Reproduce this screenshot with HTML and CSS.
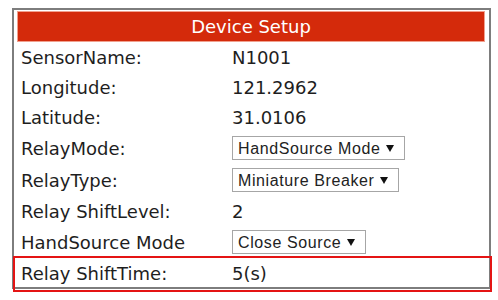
FILE: index.html
```html
<!DOCTYPE html>
<html lang="en">
<head>
    <meta charset="UTF-8">
    <title>Device Setup</title>
    <link rel="stylesheet" href="styles.css">
</head>
<body>
    <div class="setup">
        <div class="setup-title">Device Setup</div>

        <div class="setup-row">
            <span class="label">SensorName:</span>
            <span class="value">N1001</span>
        </div>
        <div class="setup-row">
            <span class="label">Longitude:</span>
            <span class="value">121.2962</span>
        </div>
        <div class="setup-row">
            <span class="label">Latitude:</span>
            <span class="value">31.0106</span>
        </div>
        <div class="setup-row select-row">
            <span class="label">RelayMode:</span>
            <span class="value">
                <span class="select">HandSource Mode
                    <svg class="arrow" width="8" height="7" viewBox="0 0 8 7"><path d="M0 0H8L4 7Z"/></svg>
                </span>
            </span>
        </div>
        <div class="setup-row select-row">
            <span class="label">RelayType:</span>
            <span class="value">
                <span class="select">Miniature Breaker
                    <svg class="arrow" width="8" height="7" viewBox="0 0 8 7"><path d="M0 0H8L4 7Z"/></svg>
                </span>
            </span>
        </div>
        <div class="setup-row">
            <span class="label">Relay ShiftLevel:</span>
            <span class="value">2</span>
        </div>
        <div class="setup-row select-row">
            <span class="label">HandSource Mode</span>
            <span class="value">
                <span class="select">Close Source
                    <svg class="arrow" width="8" height="7" viewBox="0 0 8 7"><path d="M0 0H8L4 7Z"/></svg>
                </span>
            </span>
        </div>
        <div class="setup-row">
            <span class="label">Relay ShiftTime:</span>
            <span class="value">5(s)</span>
        </div>
    </div>

    <!-- red annotation box drawn over the last row -->
    <div class="highlight"></div>
</body>
</html>
```

FILE: styles.css
```css
:root {
    --frame-color: #7d7d7d;
    --title-bg: #d42a0b;
    --title-edge: #f1a08e;
    --text-color: #1e1e1e;
    --select-border: #a6a6a6;
    --mark-color: #e41414;
}

body {
    margin: 0;
    font-family: 'DejaVu Sans', Verdana, sans-serif;
    color: var(--text-color);
    background: #ffffff;
}

.setup {
    box-sizing: border-box;
    width: 479px;
    height: 281px;
    margin: 8px 0 0 12px;
    padding: 1px 4px 0 3px;
    border: 2px solid var(--frame-color);
    overflow: hidden;
}

.setup-title {
    height: 29px;
    line-height: 29px;
    border: 1px solid var(--title-edge);
    background: var(--title-bg);
    color: #ffffff;
    font-size: 18px;
    text-align: center;
}

.setup-row {
    display: grid;
    grid-template-columns: 215px 1fr;
    align-items: center;
    height: 30px;
    font-size: 18px;
    line-height: 21px;
}

.select-row {
    height: 32px;
}

.label {
    padding-left: 4px;
}

.select {
    display: inline-flex;
    align-items: center;
    gap: 6px;
    box-sizing: border-box;
    height: 24px;
    padding: 0 10px 0 5px;
    border: 1px solid var(--select-border);
    font-family: 'Liberation Sans', Arial, sans-serif;
    font-size: 16px;
    letter-spacing: 0.6px;
    color: #222222;
    vertical-align: middle;
}

.arrow {
    fill: #111111;
}

.highlight {
    position: absolute;
    left: 13px;
    top: 256px;
    width: 475px;
    height: 32px;
    border: 2px solid var(--mark-color);
}
```
